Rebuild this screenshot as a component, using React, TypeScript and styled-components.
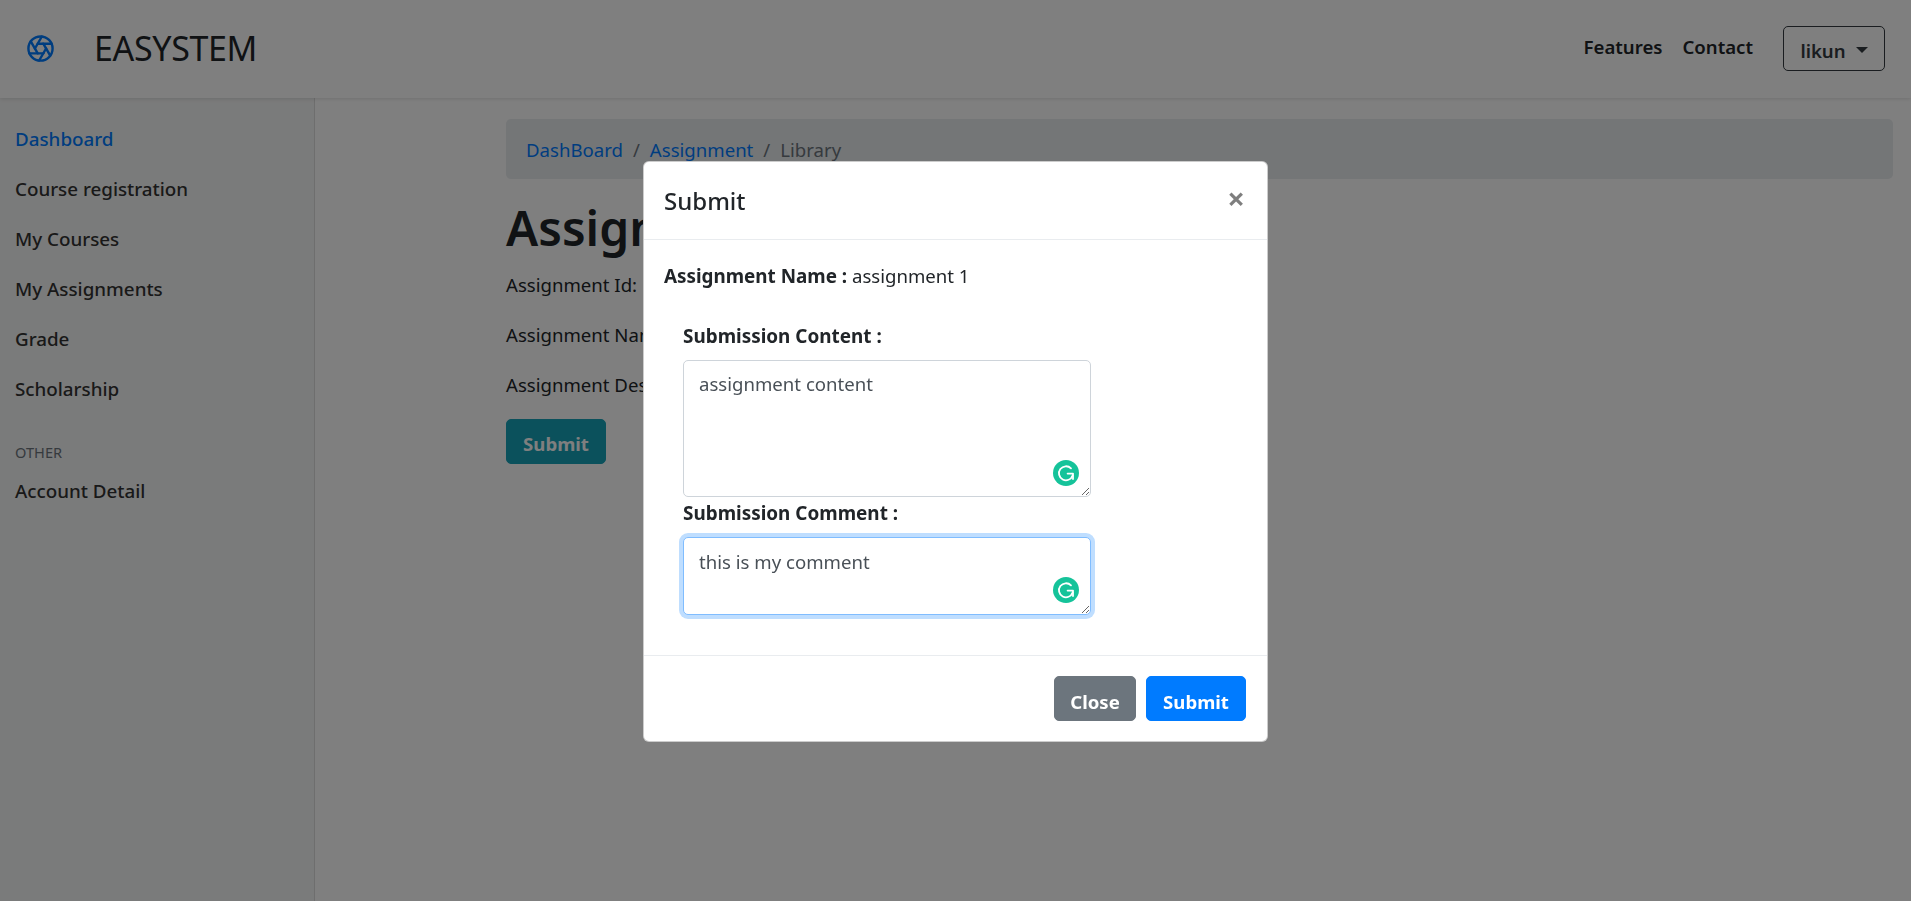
import React from 'react';
import styled, { createGlobalStyle } from 'styled-components';
import { Aperture } from 'lucide-react';

const navItems = ['Dashboard', 'Course registration', 'My Courses', 'My Assignments', 'Grade', 'Scholarship'];

const GrammarlyBadge = ({ top }: { top: number }) => (
  <Badge $top={top} viewBox="0 0 26 26">
    <circle cx="13" cy="13" r="13" fill="#15c39a" />
    <path d="M18 8.4A7 7 0 1 0 19.6 15.5" fill="none" stroke="#fff" strokeWidth="1.8" strokeLinecap="round" />
    <path d="M14.6 13.6H20V19" fill="none" stroke="#fff" strokeWidth="1.8" strokeLinecap="round" strokeLinejoin="round" />
  </Badge>
);

const App = () => {
  return (
    <Page>
      <GlobalStyle />
      <Header>
        <Brand>
          <Aperture size={29} color="#007bff" strokeWidth={2} />
          <BrandName>EASYSTEM</BrandName>
        </Brand>
        <HeaderNav>
          <HeaderLink>Features</HeaderLink>
          <HeaderLink>Contact</HeaderLink>
          <UserButton>
            likun
            <Caret />
          </UserButton>
        </HeaderNav>
      </Header>
      <Body>
        <Sidebar>
          {navItems.map((item, i) => (
            <NavItem key={item} $active={i === 0}>{item}</NavItem>
          ))}
          <NavHeading>OTHER</NavHeading>
          <NavItem>Account Detail</NavItem>
        </Sidebar>
        <Main>
          <Breadcrumb>
            <Crumb>DashBoard</Crumb>
            <CrumbSep>/</CrumbSep>
            <Crumb>Assignment</Crumb>
            <CrumbSep>/</CrumbSep>
            <CrumbCurrent>Library</CrumbCurrent>
          </Breadcrumb>
          <Title>Assignment</Title>
          <InfoLine>Assignment Id: 1</InfoLine>
          <InfoLine>Assignment Name: assignment 1</InfoLine>
          <InfoLine>Assignment Description: description</InfoLine>
          <TealButton>Submit</TealButton>
        </Main>
      </Body>
      <Backdrop>
        <Modal>
          <ModalHeader>
            <ModalTitle>Submit</ModalTitle>
            <CloseX>×</CloseX>
          </ModalHeader>
          <ModalBody>
            <NameLine><b>Assignment Name :</b> assignment 1</NameLine>
            <Form>
              <FieldLabel>Submission Content :</FieldLabel>
              <TextareaWrap>
                <ContentArea defaultValue="assignment content" />
                <GrammarlyBadge top={100} />
              </TextareaWrap>
              <FieldLabel>Submission Comment :</FieldLabel>
              <TextareaWrap>
                <CommentArea defaultValue="this is my comment" />
                <GrammarlyBadge top={40} />
              </TextareaWrap>
            </Form>
          </ModalBody>
          <ModalFooter>
            <FooterButton $bg="#6c757d" $width={82}>Close</FooterButton>
            <FooterButton $bg="#007bff" $width={100}>Submit</FooterButton>
          </ModalFooter>
        </Modal>
      </Backdrop>
    </Page>
  );
};

export default App;

const GlobalStyle = createGlobalStyle`
  html, body {
    margin: 0;
    padding: 0;
    background: #fff;
  }
  body {
    font-family: "Noto Sans", "Open Sans", sans-serif;
    font-size: 18.6px;
    line-height: 27px;
    color: #212529;
  }
  * {
    box-sizing: border-box;
  }
`;

const Page = styled.div`
  height: 901px;
  overflow: hidden;
  display: flex;
  flex-direction: column;
`;

const Header = styled.header`
  height: 98px;
  flex: none;
  display: flex;
  align-items: center;
  justify-content: space-between;
  padding: 0 26px 2px 26px;
  background: #fff;
  box-shadow: 0 1px 4px rgba(0, 0, 0, 0.12);
  position: relative;
  z-index: 1;
`;

const Brand = styled.div`
  display: flex;
  align-items: center;
  gap: 39px;
`;

const BrandName = styled.span`
  font-size: 34px;
  line-height: 40px;
  letter-spacing: -0.35px;
`;

const HeaderNav = styled.nav`
  display: flex;
  align-items: center;
  gap: 20px;
`;

const HeaderLink = styled.a`
  font-weight: 600;
  color: #212529;
  margin-bottom: 3px;
`;

const UserButton = styled.button`
  height: 45px;
  width: 102px;
  margin-left: 10px;
  padding: 4px 0 0;
  display: flex;
  align-items: center;
  justify-content: center;
  gap: 10px;
  background: transparent;
  border: 1px solid #343a40;
  border-radius: 5px;
  font: inherit;
  font-weight: 600;
  color: #343a40;
`;

const Caret = styled.span`
  width: 0;
  height: 0;
  border-top: 6px solid #343a40;
  border-left: 6px solid transparent;
  border-right: 6px solid transparent;
`;

const Body = styled.div`
  flex: 1;
  display: flex;
`;

const Sidebar = styled.aside`
  width: 315px;
  flex: none;
  padding-top: 16px;
  background: #f5f6f6;
  border-right: 1px solid #dcdcdc;
`;

const NavItem = styled.div<{ $active?: boolean }>`
  height: 50px;
  padding: 11.5px 15px;
  font-size: 18.8px;
  font-weight: 500;
  color: ${(props) => (props.$active ? '#007bff' : '#333')};
`;

const NavHeading = styled.div`
  margin: 28px 0 3px;
  padding: 0 15px;
  font-size: 14.6px;
  line-height: 21px;
  color: #6c757d;
`;

const Main = styled.main`
  flex: 1;
  padding: 21px 18px 0 191px;
`;

const Breadcrumb = styled.div`
  height: 60px;
  display: flex;
  align-items: center;
  gap: 10px;
  padding: 0 20px;
  background: #e9ecef;
  border-radius: 5px;
`;

const Crumb = styled.a`
  color: #007bff;
`;

const CrumbSep = styled.span`
  color: #6c757d;
`;

const CrumbCurrent = styled.span`
  color: #6c757d;
`;

const Title = styled.h1`
  margin: 18px 0 0;
  font-size: 48px;
  line-height: 62px;
  font-weight: 600;
`;

const InfoLine = styled.p`
  margin: 0 0 23px;
  &:first-of-type {
    margin-top: 12px;
  }
  &:last-of-type {
    margin-bottom: 21px;
  }
`;

const TealButton = styled.button`
  height: 45px;
  width: 100px;
  padding: 3px 0 0;
  background: #17a2b8;
  border: 1px solid #17a2b8;
  border-radius: 5px;
  color: #fff;
  font: inherit;
  font-weight: 700;
`;

const Backdrop = styled.div`
  position: fixed;
  inset: 0;
  z-index: 10;
  display: flex;
  justify-content: center;
  align-items: flex-start;
  padding-top: 161px;
  background: rgba(0, 0, 0, 0.5);
`;

const Modal = styled.div`
  width: 625px;
  height: 581px;
  display: flex;
  flex-direction: column;
  background: #fff;
  border: 1px solid rgba(0, 0, 0, 0.2);
  border-radius: 6px;
`;

const ModalHeader = styled.div`
  height: 78px;
  flex: none;
  display: flex;
  align-items: center;
  justify-content: space-between;
  padding: 0 20px;
  border-bottom: 1px solid #e9ecef;
`;

const ModalTitle = styled.h5`
  margin: 0 0 1px;
  font-size: 24px;
  line-height: 33px;
  font-weight: 500;
`;

const CloseX = styled.span`
  width: 22px;
  margin-bottom: 4px;
  text-align: center;
  font-size: 31px;
  font-weight: 700;
  line-height: 27px;
  color: #000;
  opacity: 0.5;
`;

const ModalBody = styled.div`
  flex: 1;
  padding: 22px 20px 0;
`;

const NameLine = styled.p`
  margin: 0;
  b {
    font-size: 18.85px;
    font-weight: 700;
  }
`;

const Form = styled.div`
  width: 427px;
  margin-top: 33px;
  padding-left: 19px;
`;

const FieldLabel = styled.label`
  display: block;
  margin-bottom: 10px;
  font-size: 18.9px;
  font-weight: 700;
`;

const TextareaWrap = styled.div`
  position: relative;
  margin-bottom: 3px;
`;

const TextArea = styled.textarea`
  display: block;
  width: 408px;
  padding: 10px 15px;
  background: #fff;
  border-radius: 5px;
  font: inherit;
  color: #495057;
  outline: none;
`;

const ContentArea = styled(TextArea)`
  height: 137px;
  padding-top: 9px;
  border: 1px solid #ced4da;
`;

const CommentArea = styled(TextArea)`
  height: 78px;
  border: 1px solid #80bdff;
  box-shadow: 0 0 0 4px #bfdeff;
`;

const Badge = styled.svg<{ $top: number }>`
  position: absolute;
  left: 370px;
  top: ${(props) => props.$top}px;
  width: 26px;
  height: 26px;
`;

const ModalFooter = styled.div`
  height: 86px;
  flex: none;
  display: flex;
  align-items: center;
  justify-content: flex-end;
  gap: 10px;
  padding: 0 21px 0 20px;
  border-top: 1px solid #e9ecef;
`;

const FooterButton = styled.button<{ $bg: string; $width: number }>`
  width: ${(props) => props.$width}px;
  height: 45px;
  padding: 5px 0 0;
  background: ${(props) => props.$bg};
  border: 1px solid ${(props) => props.$bg};
  border-radius: 5px;
  color: #fff;
  font: inherit;
  font-weight: 700;
`;
